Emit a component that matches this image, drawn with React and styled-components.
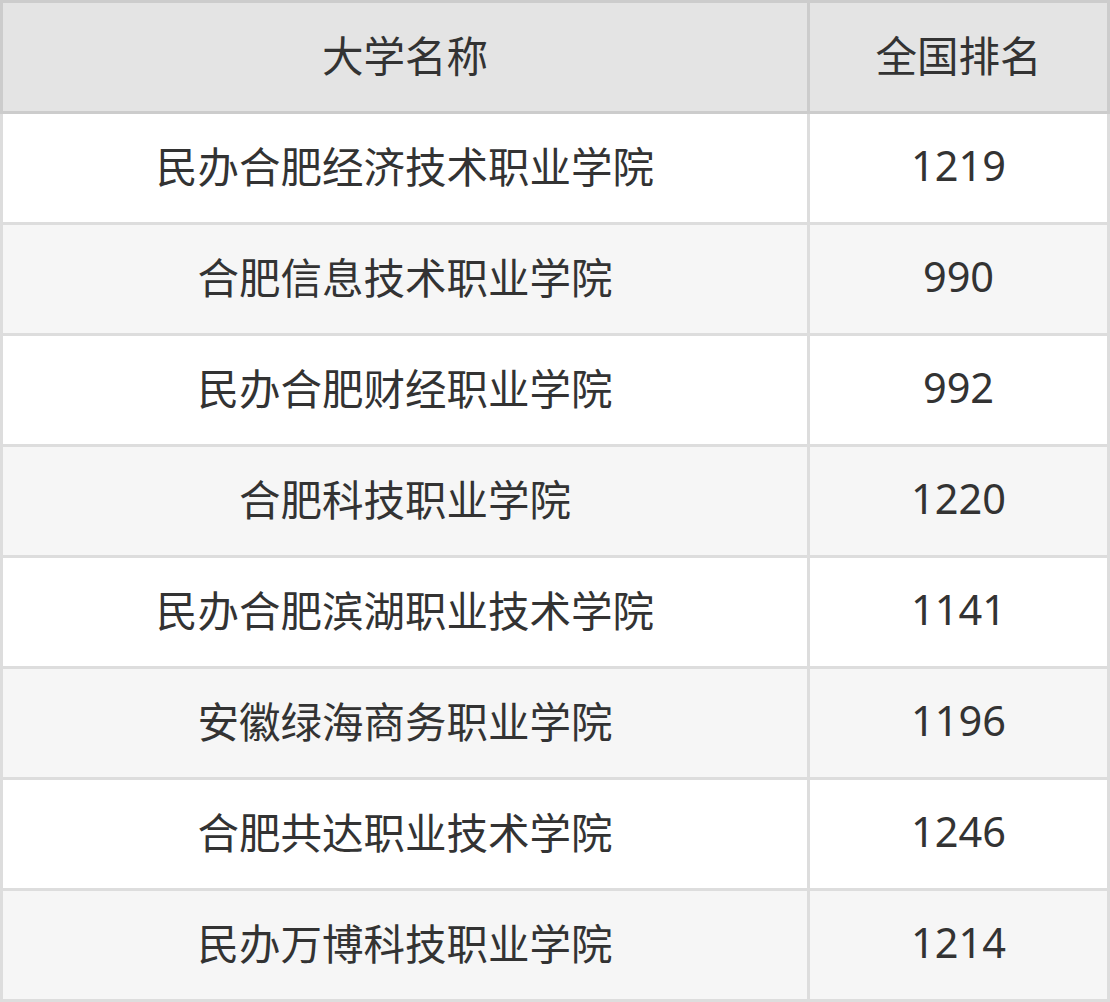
import styled, { createGlobalStyle } from "styled-components";

const GlobalStyle = createGlobalStyle`
	html, body {
		margin: 0;
		padding: 0;
		background: #ffffff;
	}
`;

const rows = [
	{ name: "民办合肥经济技术职业学院", rank: "1219" },
	{ name: "合肥信息技术职业学院", rank: "990" },
	{ name: "民办合肥财经职业学院", rank: "992" },
	{ name: "合肥科技职业学院", rank: "1220" },
	{ name: "民办合肥滨湖职业技术学院", rank: "1141" },
	{ name: "安徽绿海商务职业学院", rank: "1196" },
	{ name: "合肥共达职业技术学院", rank: "1246" },
	{ name: "民办万博科技职业学院", rank: "1214" },
];

const Table = styled.table`
	width: 1110px;
	border-collapse: collapse;
	table-layout: fixed;
	font-family: "Noto Sans", "Noto Sans CJK SC", sans-serif;
	font-size: 41.5px;
	color: #333333;
`;

const HeadCell = styled.th`
	height: 102px;
	padding: 0 0 6px;
	font-weight: 400;
	text-align: center;
	vertical-align: middle;
	background: #e4e4e4;
	border: 3px solid #cccccc;
`;

const Row = styled.tr`
	background: ${({ $striped }) => ($striped ? "#f6f6f6" : "#ffffff")};
`;

const Cell = styled.td`
	height: 102px;
	padding: 0 0 6px;
	text-align: center;
	vertical-align: middle;
	border: 3px solid #dddddd;
`;

export default function App() {
	return (
		<>
			<GlobalStyle />
			<Table>
				<colgroup>
					<col style={{ width: 807 }} />
					<col />
				</colgroup>
				<thead>
					<tr>
						<HeadCell>大学名称</HeadCell>
						<HeadCell>全国排名</HeadCell>
					</tr>
				</thead>
				<tbody>
					{rows.map((r, i) => (
						<Row key={r.name} $striped={i % 2 === 1}>
							<Cell>{r.name}</Cell>
							<Cell>{r.rank}</Cell>
						</Row>
					))}
				</tbody>
			</Table>
		</>
	);
}
